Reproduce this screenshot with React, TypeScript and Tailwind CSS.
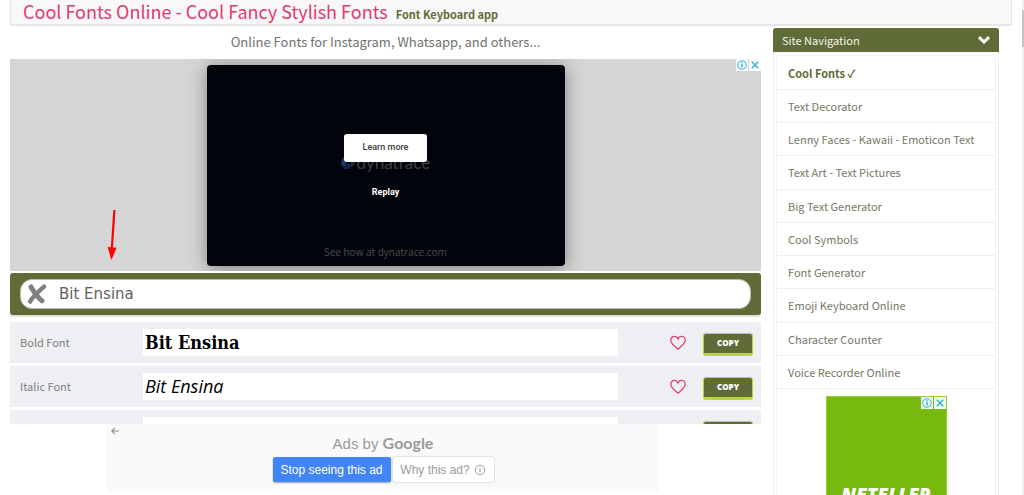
import { useState } from 'react'

const navItems = [
  'Text Decorator',
  'Lenny Faces - Kawaii - Emoticon Text',
  'Text Art - Text Pictures',
  'Big Text Generator',
  'Cool Symbols',
  'Font Generator',
  'Emoji Keyboard Online',
  'Character Counter',
  'Voice Recorder Online',
]

const fontRows = [
  { name: 'Bold Font', style: 'font-["DejaVu_Serif_Condensed","DejaVu_Serif",serif] font-bold' },
  { name: 'Italic Font', style: 'font-["Open_Sans",sans-serif] italic' },
]

function AdChoices() {
  return (
    <div className="absolute top-0 right-0 flex gap-px">
      <button type="button" aria-label="Ad info" className="bg-white/90 size-3 flex items-center justify-center">
        <svg viewBox="0 0 12 12" className="size-3" fill="none" stroke="#2fb4dc">
          <circle cx="6" cy="6" r="4.3" />
          <path d="M6 5v3.6M6 3.1v1.1" strokeWidth="1.4" />
        </svg>
      </button>
      <button type="button" aria-label="Close ad" className="bg-white/90 size-3 flex items-center justify-center">
        <svg viewBox="0 0 12 12" className="size-3" fill="none" stroke="#2fb4dc" strokeWidth="1.5">
          <path d="M2.8 2.8l6.4 6.4M9.2 2.8L2.8 9.2" />
        </svg>
      </button>
    </div>
  )
}

function VideoAd() {
  return (
    <div className="relative h-[212px] bg-[#d5d5d5] pt-[6px] overflow-hidden">
      <div className="relative mx-auto w-[358px] h-[201px] rounded-[4px] bg-[#02040c] shadow-[0_2px_18px_rgba(0,0,0,0.4)] flex flex-col items-center">
        {/* Faded brand sits behind the button */}
        <div className="absolute top-[88px] left-[134px] flex items-center gap-[2px] text-[#3d4045]">
          <svg viewBox="0 0 14 14" className="size-[14px]">
            <path d="M1 2L5 1v8L2 11 0 8z" fill="#123a68" />
            <path d="M2 11l3-3h5l1 2-3 3H3z" fill="#1a1a55" />
            <path d="M10 1l4 3-1 5-3 2z" fill="#2a2d25" />
          </svg>
          <span className="font-[Lato,sans-serif] text-[17px] leading-5">dynatrace</span>
        </div>
        <button type="button" className="relative mt-[69px] h-7 w-[83px] rounded-[3px] bg-white text-[#3c3c3c] font-[Roboto,sans-serif] font-medium text-[9px]">
          Learn more
        </button>
        <button type="button" className="mt-[24px] text-white font-[Roboto,sans-serif] font-bold text-[9px] leading-3">
          Replay
        </button>
        <p className="mt-auto mb-[6px] text-[#4b4d50] font-['Open_Sans',sans-serif] text-[10px] leading-4">
          See how at dynatrace.com
        </p>
      </div>
      <AdChoices />
      <svg viewBox="0 0 10 52" className="absolute left-[97px] top-[150px] w-[10px] h-[52px]">
        <path d="M7.4 1L4.8 40" stroke="#ff0000" strokeWidth="2.2" fill="none" />
        <path d="M0.6 38l9 .8L4.4 51z" fill="#ff0000" />
      </svg>
    </div>
  )
}

function FontRow({ name, style, text }: { name: string; style: string; text: string }) {
  return (
    <li className="flex items-center h-[41px] shrink-0 bg-[#eeeff3] pl-[10px] pr-2">
      <span className="w-[123px] pb-px text-[11px] leading-4 text-[#7b7f77]">{name}</span>
      <output className={`flex-1 h-[27px] bg-white pl-[2px] text-[18px] leading-[27px] text-black ${style}`}>{text}</output>
      <button type="button" aria-label={`Add ${name} to favourites`} className="ml-[52px] mr-[17px]">
        <svg viewBox="0 0 16 16" className="size-4" fill="none" stroke="#e2426d" strokeWidth="1.3">
          <path d="M8 14.200C5.500 12 .8 8.600 .8 5.200C.8 3 2.400 1.400 4.400 1.400C6 1.400 7.300 2.400 8 4C8.700 2.400 10 1.400 11.600 1.400C13.600 1.400 15.200 3 15.200 5.200C15.200 8.600 10.500 12 8 14.200z" />
        </svg>
      </button>
      <button
        type="button"
        className="mt-[3px] h-[23px] w-[50px] rounded-[3px] border border-b-[3px] border-[#b4d935] bg-[#606c38] text-white font-['Open_Sans',sans-serif] font-extrabold text-[8px] leading-none"
      >
        COPY
      </button>
    </li>
  )
}

function NextRow() {
  return (
    <li aria-hidden="true" className="flex h-[41px] shrink-0 bg-[#eeeff3] pl-[133px] pr-2 pt-[7px]">
      <div className="flex-1 h-[27px] bg-white" />
      <div className="ml-[85px] mt-1 h-[23px] w-[50px] rounded-[3px] border border-b-[3px] border-[#b4d935] bg-[#606c38]" />
    </li>
  )
}

function GoogleAd() {
  return (
    <div className="ml-[97px] w-[552px] h-[68px] bg-[#fafafa] relative font-['Liberation_Sans',Arial,sans-serif] flex flex-col items-center">
      <button type="button" aria-label="Back" className="absolute left-1 top-[3px]">
        <svg viewBox="0 0 8 8" className="size-2" fill="none" stroke="#8a8a8a" strokeWidth="1.2">
          <path d="M8 4H1M4 .8L.8 4L4 7.2" />
        </svg>
      </button>
      <p className="mt-[9px] text-[15px] leading-5 text-[#9b9b9b]">
        Ads by <span className="font-[Lato,sans-serif] font-bold text-[16px]">Google</span>
      </p>
      <div className="mt-[3px] flex gap-[2px]">
        <button type="button" className="h-[25px] w-[118px] rounded-[2px] bg-[#4285f4] text-white text-[12px] shadow-[0_1px_2px_rgba(0,0,0,0.35)]">
          Stop seeing this ad
        </button>
        <button type="button" className="h-[25px] w-[101px] rounded-[2px] bg-white text-[#9b9b9b] text-[12px] shadow-[0_0_2px_rgba(0,0,0,0.35)] flex items-center justify-center gap-1">
          Why this ad?
          <svg viewBox="0 0 12 12" className="size-3" fill="none" stroke="#9b9b9b">
            <circle cx="6" cy="6" r="4.700" />
            <path d="M6 5.200v3.400M6 3.200v1.200" />
          </svg>
        </button>
      </div>
    </div>
  )
}

function Sidebar() {
  return (
    <aside className="w-[226px] shrink-0 mt-[2px]">
      <button type="button" className="flex w-full h-6 items-center justify-between rounded-t-[3px] bg-[#606c38] pl-[9px] pr-[9px] text-[11px] text-[#f4f5ee]">
        Site Navigation
        <svg viewBox="0 0 12 8" className="w-3 h-2" fill="none" stroke="white" strokeWidth="3">
          <path d="M1 1.200L6 6L11 1.200" />
        </svg>
      </button>
      <div className="border-x border-[#ececec] px-[2px] pt-[3px]">
        <nav className="border border-b-0 border-[#f2f2f2] rounded-t-[3px]">
          <ul className="text-[11px] text-[#74795f]">
            <li className="h-[34px] border-b border-[#efefef]">
              <a href="#" className="block pl-[11px] leading-[34px] font-bold text-[#606c38]">Cool Fonts ✓</a>
            </li>
            {navItems.map((item) => (
              <li key={item} className="h-[33px] nth-[4n]:h-[34px] border-b border-[#efefef]">
                <a href="#" className="block pl-[11px] leading-[33px]">{item}</a>
              </li>
            ))}
          </ul>
          <div className="relative mx-auto mt-[7px] h-[240px] w-[121px] bg-[#78b90f] border border-[#93cb3c]">
            <AdChoices />
            <p className="pt-[86px] text-center text-white font-['Open_Sans',sans-serif] font-extrabold italic text-[19px] leading-6">
              NETELLER
            </p>
          </div>
        </nav>
      </div>
    </aside>
  )
}

export default function App() {
  const [text, setText] = useState('Bit Ensina')

  return (
    <div className="flex h-screen overflow-hidden bg-white font-['Noto_Sans_CJK_SC',sans-serif]">
      <div className="flex-1 min-w-0 pl-[10px] pr-[10px]">
        <header className="flex items-baseline gap-2 h-[26px] border border-t-0 border-b-2 border-[#e6e6e6] bg-[#f8f8f8] pl-3">
          <h1 className="text-[18px] leading-[22px] text-[#e5396c]">Cool Fonts Online - Cool Fancy Stylish Fonts</h1>
          <a href="#" className="text-[11px] leading-4 font-bold text-[#606c38]">Font Keyboard app</a>
        </header>

        <div className="flex gap-3 pr-[13px]">
          <main className="flex-1 min-w-0">
            <p className="h-[33px] text-center text-[13px] leading-[32px] text-[#6f736d]">
              Online Fonts for Instagram, Whatsapp, and others...
            </p>
            <VideoAd />

            <div className="mt-[2px] h-[42px] rounded-[3px] bg-[#606c38] px-[10px] pt-[6px] shadow-[0_2px_1px_#dfe0dc]">
              <div className="flex items-center h-[30px] rounded-[12px] bg-white border border-[#b9bfae] pl-[6px]">
                <button type="button" aria-label="Clear text">
                  <svg viewBox="0 0 20 20" className="size-5" fill="none" stroke="#808080" strokeLinecap="round">
                    <path d="M4 3C6.500 7 10 13 15 16.800" strokeWidth="5" />
                    <path d="M17 2.600C12 7 6 12 3.200 17.600" strokeWidth="4.400" />
                  </svg>
                </button>
                <input
                  aria-label="Your text"
                  value={text}
                  onChange={(e) => setText(e.target.value)}
                  className="flex-1 ml-[12px] font-['DejaVu_Sans',sans-serif] text-[15px] leading-5 text-[#606060] outline-none"
                />
              </div>
            </div>

            <ul className="mt-[7px] flex flex-col gap-[3px] h-[102px] overflow-hidden">
              {fontRows.map((row) => (
                <FontRow key={row.name} name={row.name} style={row.style} text={text} />
              ))}
              <NextRow />
            </ul>
            <GoogleAd />
          </main>
          <Sidebar />
        </div>
      </div>
      <div className="w-[2px] shrink-0 bg-[#f1f1f1] pt-[10px]">
        <div className="h-[37px] bg-[#c4c4c4]" />
      </div>
    </div>
  )
}
